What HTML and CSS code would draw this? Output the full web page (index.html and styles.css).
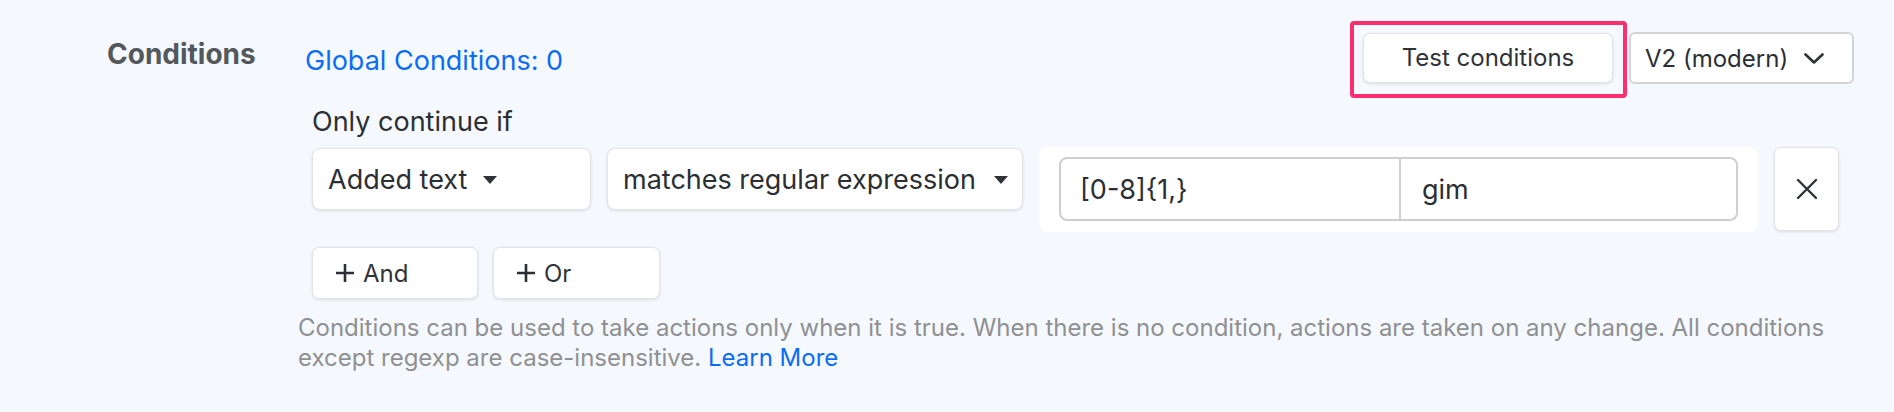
FILE: index.html
```html
<!DOCTYPE html>
<html lang="en">
<head>
<meta charset="utf-8">
<title>Conditions</title>
<link rel="stylesheet" href="styles.css">
</head>
<body>
<div class="section">
  <div class="section-label">Conditions</div>
  <div class="section-body">
    <div class="top-row">
      <a class="link global-link" href="#">Global Conditions: 0</a>
      <div class="top-actions">
        <button class="btn btn-test" type="button">Test conditions</button>
        <div class="version-select">
          <span>V2 (modern)</span>
          <svg class="chevron" width="20" height="11" viewBox="0 0 20 11"><polyline points="1.5,1.5 10,9.5 18.5,1.5" fill="none" stroke="#2f3337" stroke-width="2.6" stroke-linecap="round" stroke-linejoin="round"/></svg>
        </div>
      </div>
    </div>
    <div class="only-if">Only continue if</div>
    <div class="cond-row">
      <div class="select sel-field">
        <span>Added text</span>
        <span class="caret"></span>
      </div>
      <div class="select sel-op">
        <span>matches regular expression</span>
        <span class="caret"></span>
      </div>
      <div class="value-group">
        <div class="value-input">
          <div class="v-main">[0-8]{1,}</div>
          <div class="v-flags">gim</div>
        </div>
      </div>
      <button class="btn remove-btn" type="button" aria-label="Remove">
        <svg width="24" height="24" viewBox="0 0 24 24"><path d="M3 3 L21 21 M21 3 L3 21" fill="none" stroke="#2f3337" stroke-width="2.4" stroke-linecap="round"/></svg>
      </button>
    </div>
    <div class="logic-row">
      <button class="btn logic-btn btn-and" type="button">
        <svg class="plus" width="20" height="20" viewBox="0 0 20 20"><path d="M10 1 V19 M1 10 H19" fill="none" stroke="#2b2f33" stroke-width="2.6"/></svg>
        <span>And</span>
      </button>
      <button class="btn logic-btn btn-or" type="button">
        <svg class="plus" width="20" height="20" viewBox="0 0 20 20"><path d="M10 1 V19 M1 10 H19" fill="none" stroke="#2b2f33" stroke-width="2.6"/></svg>
        <span>Or</span>
      </button>
    </div>
    <p class="help">Conditions can be used to take actions only when it is true. When there is no condition, actions are taken on any change. All conditions except regexp are case-insensitive. <a class="link" href="#">Learn More</a></p>
  </div>
</div>
</body>
</html>
```

FILE: styles.css
```css
* {
  box-sizing: border-box;
}

html, body {
  margin: 0;
  padding: 0;
}

body {
  width: 1894px;
  height: 412px;
  overflow: hidden;
  background: #f5f9fd;
  font-family: Inter, "Liberation Sans", Arial, sans-serif;
  color: #2b2f33;
}

.section {
  display: flex;
  padding-right: 40px;
}

.section-label {
  width: 298px;
  flex: none;
  padding-left: 107px;
  padding-top: 38px;
  font-size: 28px;
  line-height: 32px;
  font-weight: 700;
  color: #53585d;
}

.section-body {
  flex: 1;
  padding-top: 32px;
}

.link {
  color: #0b6cf5;
  text-decoration: none;
}

.top-row {
  display: flex;
  align-items: center;
  justify-content: space-between;
  height: 52px;
  padding-left: 7px;
}

.global-link {
  font-size: 27px;
  line-height: 32px;
  padding-top: 5px;
}

.top-actions {
  display: flex;
  align-items: center;
  gap: 16px;
}

.btn {
  font-family: inherit;
  color: #2f3337;
  background: #fff;
  border: 1px solid #e0e3e7;
  border-radius: 7px;
  box-shadow: 0 1px 3px rgba(20, 30, 45, 0.12);
  padding: 0;
  cursor: pointer;
}

.btn-test {
  position: relative;
  width: 250px;
  height: 50px;
  font-size: 24px;
  margin-top: -1px;
}

.btn-test::after {
  content: "";
  position: absolute;
  left: -14px;
  top: -13px;
  right: -15px;
  bottom: -16px;
  border: 4px solid #fd2f6f;
  border-radius: 4px;
  pointer-events: none;
}

.version-select {
  width: 225px;
  height: 52px;
  display: flex;
  align-items: center;
  justify-content: space-between;
  padding: 0 28px 0 14px;
  background: #fff;
  border: 2px solid #d2d4d6;
  border-radius: 6px;
  font-size: 24px;
  color: #2b2f33;
}

.chevron {
  display: block;
}

.only-if {
  margin-top: 22px;
  padding-left: 14px;
  font-size: 27px;
  line-height: 32px;
  color: #2b2f33;
}

.cond-row {
  display: flex;
  align-items: flex-start;
  gap: 16px;
  margin-top: 9px;
  padding-left: 14px;
}

.select {
  height: 62px;
  margin-top: 1px;
  display: flex;
  align-items: center;
  padding-left: 15px;
  background: #fff;
  border: 1px solid #e0e3e7;
  border-radius: 8px;
  box-shadow: 0 1px 3px rgba(20, 30, 45, 0.12);
  font-size: 27px;
  color: #2b2f33;
}

.sel-field {
  width: 279px;
}

.sel-field .caret {
  margin-left: 16px;
}

.sel-op {
  width: 416px;
  justify-content: space-between;
  padding-right: 14px;
}

.caret {
  width: 0;
  height: 0;
  border-left: 7px solid transparent;
  border-right: 7px solid transparent;
  border-top: 8px solid #2f3337;
  margin-top: 2px;
}

.value-group {
  width: 719px;
  height: 85px;
  padding: 10px 20px 11px;
  background: #fff;
  border-radius: 10px;
}

.value-input {
  display: flex;
  height: 64px;
  border: 2px solid #cfcfcf;
  border-radius: 8px;
  font-size: 27px;
  color: #2b2f33;
}

.v-main {
  width: 340px;
  display: flex;
  align-items: center;
  padding-left: 19px;
  border-right: 2px solid #cfcfcf;
}

.v-flags {
  flex: 1;
  display: flex;
  align-items: center;
  padding-left: 21px;
}

.remove-btn {
  width: 65px;
  height: 84px;
  display: flex;
  align-items: center;
  justify-content: center;
}

.logic-row {
  display: flex;
  gap: 15px;
  margin-top: 15px;
  padding-left: 14px;
}

.logic-btn {
  height: 52px;
  display: flex;
  align-items: center;
  gap: 8px;
  padding-left: 22px;
  font-size: 24px;
}

.btn-and {
  width: 166px;
}

.btn-or {
  width: 167px;
}

.plus {
  display: block;
}

.help {
  margin: 14px 0 0;
  font-size: 24px;
  line-height: 30px;
  color: #8f9093;
}
```
